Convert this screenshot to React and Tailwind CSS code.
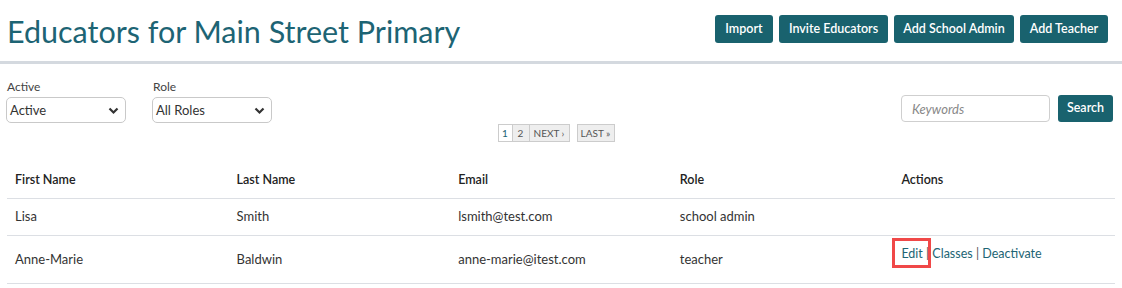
import React from "react";

function Chevron() {
  return (
    <svg width="11" height="8" viewBox="0 0 11 8" className="absolute right-[6px] top-[9px]">
      <path d="M1.5 1.5 L5.5 5.5 L9.5 1.5" fill="none" stroke="#333" strokeWidth="2.2" />
    </svg>
  );
}

function FakeSelect({ label, value }) {
  return (
    <div className="flex flex-col w-[120px]">
      <div className="text-[12px] leading-[16px] text-[#444] pl-[1px] mt-[1px]">{label}</div>
      <div className="relative mt-[2px] h-[26px] border border-[#c9c9c9] rounded-[5px] bg-white text-[13px] leading-[25px] text-[#333] pl-[3px]">
        {value}
        <Chevron />
      </div>
    </div>
  );
}

const btn =
  "rounded-[3px] bg-[#19626e] text-white text-[12.5px] font-semibold flex items-center justify-center";

const rows = [
  { first: "Lisa", last: "Smith", email: "lsmith@test.com", role: "school admin", actions: false },
  { first: "Anne-Marie", last: "Baldwin", email: "anne-marie@itest.com", role: "teacher", actions: true },
];

export default function App() {
  return (
    <div className="w-[1122px] h-[288px] bg-white font-['Lato',sans-serif] text-[#333] overflow-hidden">
      <div className="flex justify-between h-[64px] pl-[7px] pr-[14px] border-b-[3px] border-[#d4d9df]">
        <h1 className="text-[30.5px] leading-[40px] mt-[11px] text-[#1d6474] font-normal">
          Educators for Main Street Primary
        </h1>
        <div className="flex gap-[6px] mt-[15px]">
          <div className={btn + " h-[28px] w-[58px]"}>Import</div>
          <div className={btn + " h-[28px] w-[109px]"}>Invite Educators</div>
          <div className={btn + " h-[28px] w-[120px]"}>Add School Admin</div>
          <div className={btn + " h-[28px] w-[88px]"}>Add Teacher</div>
        </div>
      </div>

      <div className="flex justify-between pl-[6px] pr-[9px] mt-[14px]">
        <div className="flex gap-[26px]">
          <FakeSelect label="Active" value="Active" />
          <FakeSelect label="Role" value="All Roles" />
        </div>
        <div className="flex gap-[8px] mt-[17px]">
          <div className="w-[149px] h-[27px] border border-[#cfcfcf] rounded-[4px] text-[13px] italic text-[#888] leading-[26px] pl-[10px]">
            Keywords
          </div>
          <div className={btn + " h-[27px] w-[55px]"}>Search</div>
        </div>
      </div>

      <div className="flex justify-center mt-[1px] pr-[10px] text-[10px] leading-[16px]">
        <div className="flex">
          <div className="h-[18px] w-[15px] border border-[#ccc] bg-white text-[#1d6474] flex items-center justify-center">1</div>
          <div className="h-[18px] w-[17px] border border-l-0 border-[#ccc] bg-[#eee] text-[#555] flex items-center justify-center">2</div>
          <div className="h-[18px] w-[40px] border border-l-0 border-[#ccc] bg-[#eee] text-[#555] flex items-center justify-center">NEXT ›</div>
        </div>
        <div className="h-[18px] w-[38px] ml-[7px] border border-[#ccc] bg-[#eee] text-[#555] flex items-center justify-center">LAST »</div>
      </div>

      <div className="mx-[7px] mt-[18px] text-[13px]">
        <div className="grid grid-cols-5 h-[39px] pt-[3px] border-b border-[#dcdfe4] font-semibold text-[12.5px] text-[#222] items-center">
          <div className="pl-[8px]">First Name</div>
          <div className="pl-[8px]">Last Name</div>
          <div className="pl-[8px]">Email</div>
          <div className="pl-[8px]">Role</div>
          <div className="pl-[8px]">Actions</div>
        </div>
        {rows.map((r) => (
          <div
            key={r.first}
            className={
              "grid grid-cols-5 border-b border-[#dcdfe4] items-center " +
              (r.actions ? "h-[48px]" : "h-[37px]")
            }
          >
            <div className="pl-[8px]">{r.first}</div>
            <div className="pl-[8px]">{r.last}</div>
            <div className="pl-[8px]">{r.email}</div>
            <div className="pl-[8px]">{r.role}</div>
            <div className="pl-[8px] self-start pt-[9px] relative text-[#1d6474] text-[12.5px] whitespace-pre">
              {r.actions && (
                <>
                  <span>Edit</span>
                  <span className="text-[#555]"> | </span>
                  <span>Classes</span>
                  <span className="text-[#555]"> | </span>
                  <span>Deactivate</span>
                  <div className="absolute left-[-1px] top-[2px] w-[39px] h-[30px] border-[3px] border-[#f04848]" />
                </>
              )}
            </div>
          </div>
        ))}
      </div>
    </div>
  );
}
